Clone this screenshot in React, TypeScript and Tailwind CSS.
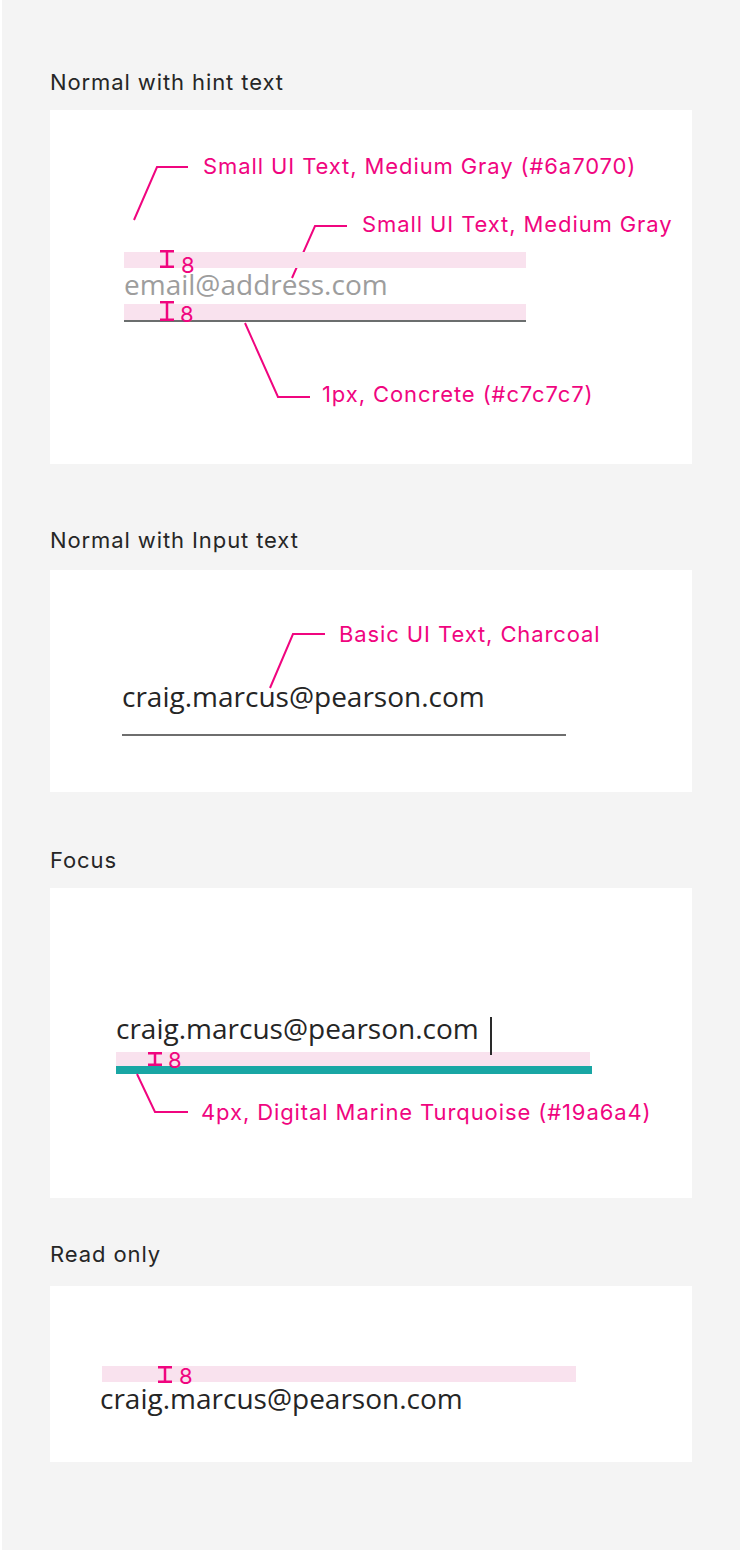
const PINK = "#f0057f";

function Marker({ left, beamTop, beamH, numLeft, numTop }: { left: number; beamTop: number; beamH: number; numLeft: number; numTop: number }) {
  return (
    <>
      <svg
        className="absolute"
        style={{ left, top: beamTop }}
        width={14}
        height={beamH}
        viewBox={`0 0 14 ${beamH}`}
      >
        <path d={`M0 1.25H14M7 1V${beamH - 1}M0 ${beamH - 1.25}H14`} stroke={PINK} strokeWidth={2.5} fill="none" />
      </svg>
      <span
        className="absolute text-[22px] leading-none text-[#f0057f] font-['Inter',sans-serif]"
        style={{ left: numLeft, top: numTop }}
      >
        8
      </span>
    </>
  );
}

function Leader({ points }: { points: string }) {
  return <polyline points={points} stroke={PINK} strokeWidth={2} fill="none" />;
}

function Note({ children, left, top }: { children: React.ReactNode; left: number; top: number }) {
  return (
    <span
      className="absolute whitespace-nowrap text-[22px] leading-[24px] tracking-[0.9px] text-[#f0057f] font-['Inter',sans-serif]"
      style={{ left, top }}
    >
      {children}
    </span>
  );
}

function Label({ children, className }: { children: React.ReactNode; className?: string }) {
  return (
    <h2 className={"text-[22px] leading-[24px] tracking-[0.9px] text-[#262626] font-['Inter',sans-serif] " + (className ?? "")}>
      {children}
    </h2>
  );
}

const emailText = "h-[36px] pb-[4px] text-[28px] leading-[32px] font-['Open_Sans',sans-serif] whitespace-nowrap";

export default function App() {
  return (
    <div className="min-h-[1550px] bg-white pl-[2px]">
      <div className="min-h-[1550px] bg-[#f4f4f4] pl-[48px] pr-[48px] pt-[70px] pb-[88px]">
        {/* Normal with hint text */}
        <Label>Normal with hint text</Label>
        <div className="relative mt-4 h-[354px] bg-white">
          <svg className="absolute inset-0" width={642} height={354}>
            <Leader points="84,110 107,57 138,57" />
            <Leader points="242,168 265,116 297,116" />
            <Leader points="195,213 228,287 260,287" />
          </svg>
          <Note left={153} top={44}>Small UI Text, Medium Gray (#6a7070)</Note>
          <Note left={312} top={102}>Small UI Text, Medium Gray</Note>
          <Note left={272} top={272}>1px, Concrete (#c7c7c7)</Note>

          <div className="pl-[74px] pt-[142px]">
            <div className="w-[402px]">
              <div className="relative h-4 bg-[#f9e2ee]">
                <Marker left={36} beamTop={-2} beamH={18} numLeft={57} numTop={2} />
              </div>
              <div className={emailText + " text-[#9d9d9d]"}>email@address.com</div>
              <div className="relative h-4 bg-[#f9e2ee]">
                <Marker left={36} beamTop={-3} beamH={20} numLeft={56} numTop={-1} />
              </div>
              <div className="h-[2px] bg-[#6b6e6e]" />
            </div>
          </div>
        </div>

        {/* Normal with Input text */}
        <Label className="mt-16">Normal with Input text</Label>
        <div className="relative mt-[18px] h-[222px] bg-white">
          <svg className="absolute inset-0" width={642} height={222}>
            <Leader points="220,118 243,64 275,64" />
          </svg>
          <Note left={289} top={52}>Basic UI Text, Charcoal</Note>
          <div className="pl-[72px] pt-[110px]">
            <div className={emailText + " text-[#252525]"}>craig.marcus@pearson.com</div>
            <div className="mt-[18px] h-[2px] w-[444px] bg-[#6e6e6e]" />
          </div>
        </div>

        {/* Focus */}
        <Label className="mt-14">Focus</Label>
        <div className="relative mt-4 h-[310px] bg-white">
          <svg className="absolute inset-0" width={642} height={310}>
            <Leader points="87,186 105,224 138,224" />
          </svg>
          <Note left={151} top={212}>4px, Digital Marine Turquoise (#19a6a4)</Note>
          <div className="pl-[66px] pt-[124px]">
            <div className={emailText + " text-[#252525]"}>craig.marcus@pearson.com</div>
            <div className="relative mt-1 h-[14px] w-[474px] bg-[#f9e2ee]">
              <Marker left={32} beamTop={0} beamH={14} numLeft={52} numTop={-3} />
            </div>
            <div className="h-2 w-[476px] bg-[#19a6a4]" />
          </div>
          <div className="absolute left-[440px] top-[129px] h-[38px] w-[2px] bg-[#2a2a2a]" />
        </div>

        {/* Read only */}
        <Label className="mt-11">Read only</Label>
        <div className="relative mt-5 h-[176px] bg-white">
          <div className="pl-[52px] pt-[80px]">
            <div className="relative h-4 w-[474px] bg-[#f9e2ee]">
              <Marker left={56} beamTop={0} beamH={17} numLeft={77} numTop={-1} />
            </div>
            <div className={emailText + " -ml-[2px] text-[#252525]"}>craig.marcus@pearson.com</div>
          </div>
        </div>
      </div>
    </div>
  );
}
